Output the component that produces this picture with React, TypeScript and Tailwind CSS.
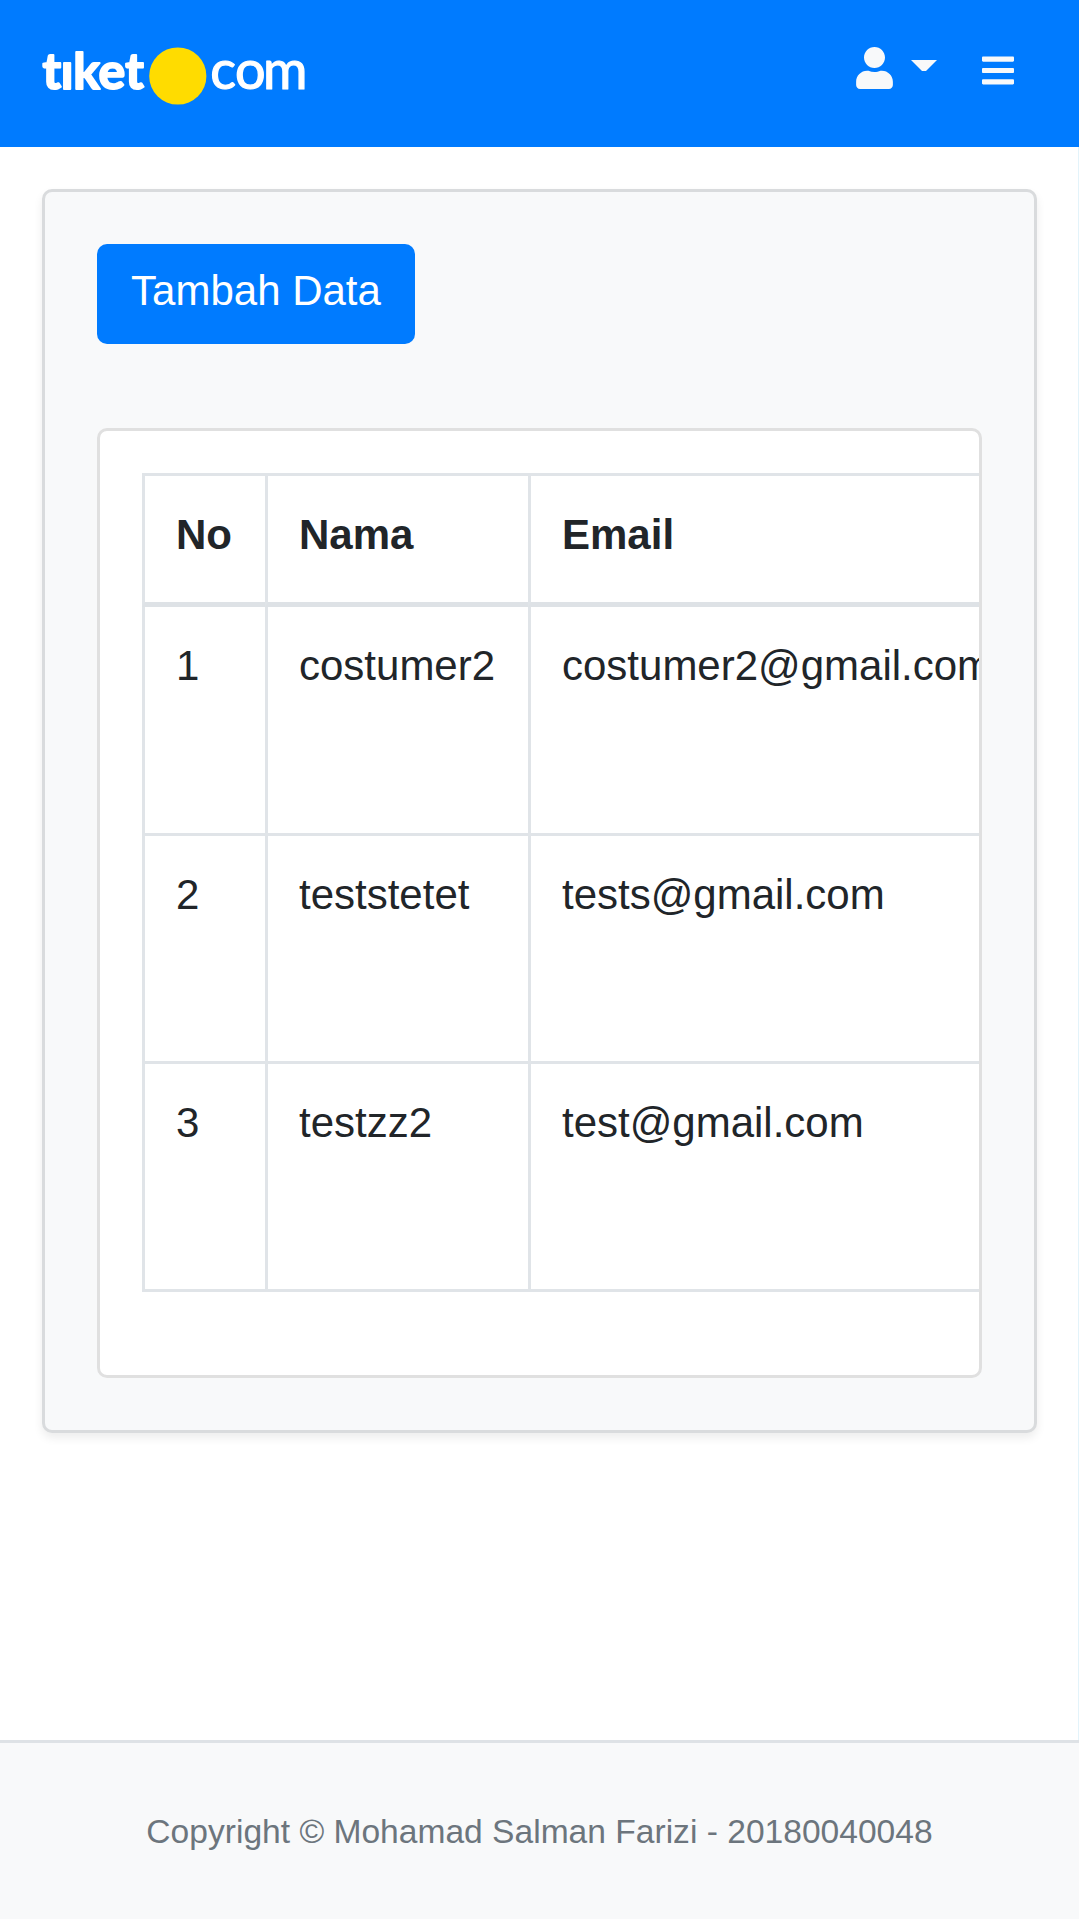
import { FaBars, FaUser } from "react-icons/fa";

const customers = [
  { name: "costumer2", email: "costumer2@gmail.com" },
  { name: "teststetet", email: "tests@gmail.com" },
  { name: "testzz2", email: "test@gmail.com" },
];

function Logo() {
  return (
    <svg width="280" height="64" viewBox="0 0 280 64" aria-label="tiket.com" className="block overflow-visible">
      <g fill="#fff" stroke="#fff" strokeLinejoin="round" fontFamily="Lato, sans-serif">
        <text x="0.5 18.8 31.2 56.4 83.3" y="46.6" fontSize="50" fontWeight="700" strokeWidth="2">
          tıket
        </text>
        <text x="168.3 193 221" y="47" fontSize="54" fontWeight="400" strokeWidth="1.2">
          com
        </text>
      </g>
      <circle cx="135.8" cy="34" r="28.6" fill="#ffdc00" />
    </svg>
  );
}

function Header() {
  return (
    <header className="flex h-[147px] items-start justify-between bg-[#007bff] pl-[42px] pr-[65px] text-[#f8f9fa]">
      <a className="pt-[42px]">
        <Logo />
      </a>
      <div className="flex items-start">
        <button className="flex items-start pt-[47px]" aria-label="Account">
          <FaUser className="h-[42px] w-[37px]" />
          <svg width="26" height="12" viewBox="0 0 26 12" className="ml-[18px] mt-[13px]">
            <path d="M0 0H26L15 11H11Z" fill="currentColor" />
          </svg>
        </button>
        <button className="ml-[45px] pt-[52px]" aria-label="Menu">
          <FaBars className="h-[37px] w-[32px]" />
        </button>
      </div>
    </header>
  );
}

function CustomerTable() {
  return (
    <table className="w-[1300px] table-fixed border-separate border-spacing-0 text-left">
      <colgroup>
        <col className="w-[123px]" />
        <col className="w-[263px]" />
        <col />
      </colgroup>
      <thead>
        <tr>
          {["No", "Nama", "Email"].map((label) => (
            <th key={label} className="h-[134px] border-b-[5px] border-l-[3px] border-t-[3px] border-[#e0e4e8] border-b-[#dee2e6] pb-[35px] pl-[31px] pt-[27px] align-top font-bold">
              {label}
            </th>
          ))}
        </tr>
      </thead>
      <tbody>
        {customers.map((customer) => (
          <tr key={customer.email} className="group">
            {[customers.indexOf(customer) + 1, customer.name, customer.email].map((value) => (
              <td key={value} className="h-[228px] border-b-[3px] border-l-[3px] border-[#e0e4e8] pl-[31px] pt-[27px] align-top group-first:h-[229px]">
                {value}
              </td>
            ))}
          </tr>
        ))}
      </tbody>
    </table>
  );
}

export default function App() {
  return (
    <div className="flex h-[1919px] w-[1079px] flex-col overflow-hidden bg-white font-['Liberation_Sans',Arial,sans-serif] text-[42px] leading-[63px] text-[#212529]">
      <Header />
      <main className="flex-1 border-r border-[#e3f3fa] pl-[42px] pr-[41px] pt-[42px]">
        <section className="h-[1244px] rounded-[10px] border-[3px] border-[#d9dbdd] bg-[#f8f9fa] px-[52px] pt-[52px] shadow-[0_5px_10px_rgba(0,0,0,0.075)]">
          <button className="flex h-[100px] w-[318px] justify-center rounded-[10px] bg-[#007bff] pt-[15px] text-white">
            Tambah Data
          </button>
          <div className="mt-[84px] h-[950px] overflow-hidden rounded-[10px] border-[3px] border-[#e0e0e0] bg-white pl-[42px] pt-[42px]">
            <CustomerTable />
          </div>
        </section>
      </main>
      <footer className="h-[179px] border-t-[3px] border-[#dee2e6] bg-[#f8f9fa] pt-[64px] text-center text-[33.6px] leading-[50px] text-[#6c757d]">
        Copyright © Mohamad Salman Farizi - 20180040048
      </footer>
    </div>
  );
}
